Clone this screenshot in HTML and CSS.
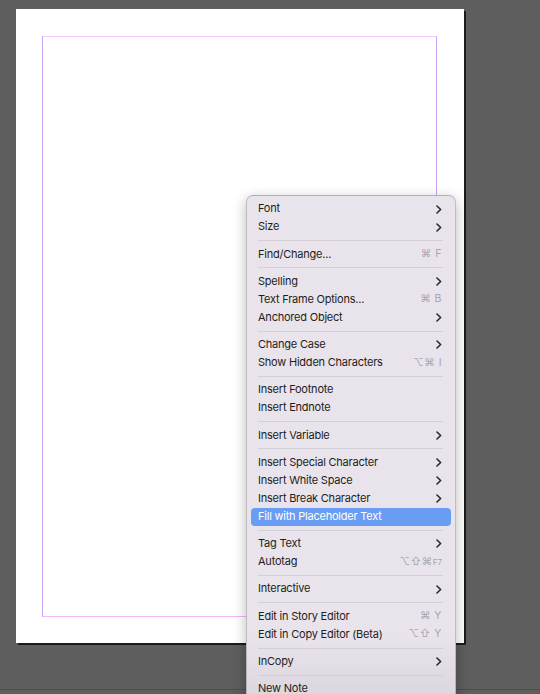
FILE: index.html
```html
<!DOCTYPE html>
<html>
<head>
<meta charset="utf-8">
<link rel="stylesheet" href="styles.css">
</head>
<body>
<div class="stage">
  <div class="page">
    <div class="margins"></div>
  </div>
  <div class="floor"></div>

  <div class="menu">
    <div class="item"><span class="label">Font</span><svg class="chev" viewBox="0 0 6 9"><path d="M1 1 L4.6 4.5 L1 8"/></svg></div>
    <div class="item"><span class="label">Size</span><svg class="chev" viewBox="0 0 6 9"><path d="M1 1 L4.6 4.5 L1 8"/></svg></div>
    <div class="sep"></div>
    <div class="item"><span class="label">Find/Change...</span><span class="key">⌘ F</span></div>
    <div class="sep"></div>
    <div class="item"><span class="label">Spelling</span><svg class="chev" viewBox="0 0 6 9"><path d="M1 1 L4.6 4.5 L1 8"/></svg></div>
    <div class="item"><span class="label">Text Frame Options...</span><span class="key">⌘ B</span></div>
    <div class="item"><span class="label">Anchored Object</span><svg class="chev" viewBox="0 0 6 9"><path d="M1 1 L4.6 4.5 L1 8"/></svg></div>
    <div class="sep"></div>
    <div class="item"><span class="label">Change Case</span><svg class="chev" viewBox="0 0 6 9"><path d="M1 1 L4.6 4.5 L1 8"/></svg></div>
    <div class="item"><span class="label">Show Hidden Characters</span><span class="key">⌥⌘ I</span></div>
    <div class="sep"></div>
    <div class="item"><span class="label">Insert Footnote</span></div>
    <div class="item"><span class="label">Insert Endnote</span></div>
    <div class="sep"></div>
    <div class="item"><span class="label">Insert Variable</span><svg class="chev" viewBox="0 0 6 9"><path d="M1 1 L4.6 4.5 L1 8"/></svg></div>
    <div class="sep"></div>
    <div class="item"><span class="label">Insert Special Character</span><svg class="chev" viewBox="0 0 6 9"><path d="M1 1 L4.6 4.5 L1 8"/></svg></div>
    <div class="item"><span class="label">Insert White Space</span><svg class="chev" viewBox="0 0 6 9"><path d="M1 1 L4.6 4.5 L1 8"/></svg></div>
    <div class="item"><span class="label">Insert Break Character</span><svg class="chev" viewBox="0 0 6 9"><path d="M1 1 L4.6 4.5 L1 8"/></svg></div>
    <div class="item active"><span class="label">Fill with Placeholder Text</span></div>
    <div class="sep"></div>
    <div class="item"><span class="label">Tag Text</span><svg class="chev" viewBox="0 0 6 9"><path d="M1 1 L4.6 4.5 L1 8"/></svg></div>
    <div class="item"><span class="label">Autotag</span><span class="key">⌥⇧⌘<small>F7</small></span></div>
    <div class="sep"></div>
    <div class="item"><span class="label">Interactive</span><svg class="chev" viewBox="0 0 6 9"><path d="M1 1 L4.6 4.5 L1 8"/></svg></div>
    <div class="sep"></div>
    <div class="item"><span class="label">Edit in Story Editor</span><span class="key">⌘ Y</span></div>
    <div class="item"><span class="label">Edit in Copy Editor (Beta)</span><span class="key">⌥⇧ Y</span></div>
    <div class="sep"></div>
    <div class="item"><span class="label">InCopy</span><svg class="chev" viewBox="0 0 6 9"><path d="M1 1 L4.6 4.5 L1 8"/></svg></div>
    <div class="sep"></div>
    <div class="item"><span class="label">New Note</span></div>
  </div>
</div>
</body>
</html>
```

FILE: styles.css
```css
html, body {
  margin: 0;
  padding: 0;
  background: #5e5e5e;
  width: 540px;
  height: 694px;
  overflow: hidden;
}

.stage {
  position: relative;
  width: 540px;
  height: 694px;
  padding-top: 9px;
  box-sizing: border-box;
}

.page {
  margin-left: 16px;
  width: 448px;
  height: 634px;
  background: #ffffff;
  box-shadow: 2px 2px 0 #1c1c1c;
  padding: 27px 0 0 26px;
  box-sizing: border-box;
}

.margins {
  width: 395px;
  height: 581px;
  box-sizing: border-box;
  border-top: 1px solid #f6c6f8;
  border-bottom: 1px solid #f6b6f8;
  border-left: 1px solid #c9a2fb;
  border-right: 1px solid #c9a2fb;
}

.floor {
  margin-top: 46px;
  height: 1px;
  background: #4c4c4c;
}

.menu {
  position: absolute;
  left: 246px;
  top: 195px;
  width: 210px;
  height: 520px;
  box-sizing: border-box;
  padding: 4px 4px;
  background: linear-gradient(to bottom, #e9e4eb 0, #e9e4eb 440px, #dcd7de 500px);
  border: 0.5px solid rgba(0, 0, 0, 0.18);
  border-radius: 7px;
  box-shadow: 0 4px 14px rgba(0, 0, 0, 0.28);
  font-family: "Inter", "Liberation Sans", sans-serif;
  font-size: 11px;
  letter-spacing: -0.22px;
  color: #1e1d20;
}

.item {
  height: 18px;
  box-sizing: border-box;
  display: flex;
  align-items: center;
  justify-content: space-between;
  padding: 0 9px 1.5px 7px;
  border-radius: 4px;
}

.item.active {
  background: #699cf3;
  color: #ffffff;
}

.label {
  white-space: nowrap;
}

.key {
  color: #a8a4ab;
  font-size: 10.5px;
  letter-spacing: 0.5px;
  white-space: nowrap;
}

.key small {
  font-size: 8px;
  letter-spacing: 0;
}

.chev {
  width: 6px;
  height: 9px;
  margin-top: 1.5px;
  fill: none;
  stroke: #2a292c;
  stroke-width: 1.6;
  stroke-linecap: round;
  stroke-linejoin: round;
}

.sep {
  height: 9.27px;
  display: flex;
  align-items: center;
  padding: 0 8px 0 7px;
}

.sep::after {
  content: "";
  flex: 1;
  height: 1px;
  background: #d3cfd5;
}
```
